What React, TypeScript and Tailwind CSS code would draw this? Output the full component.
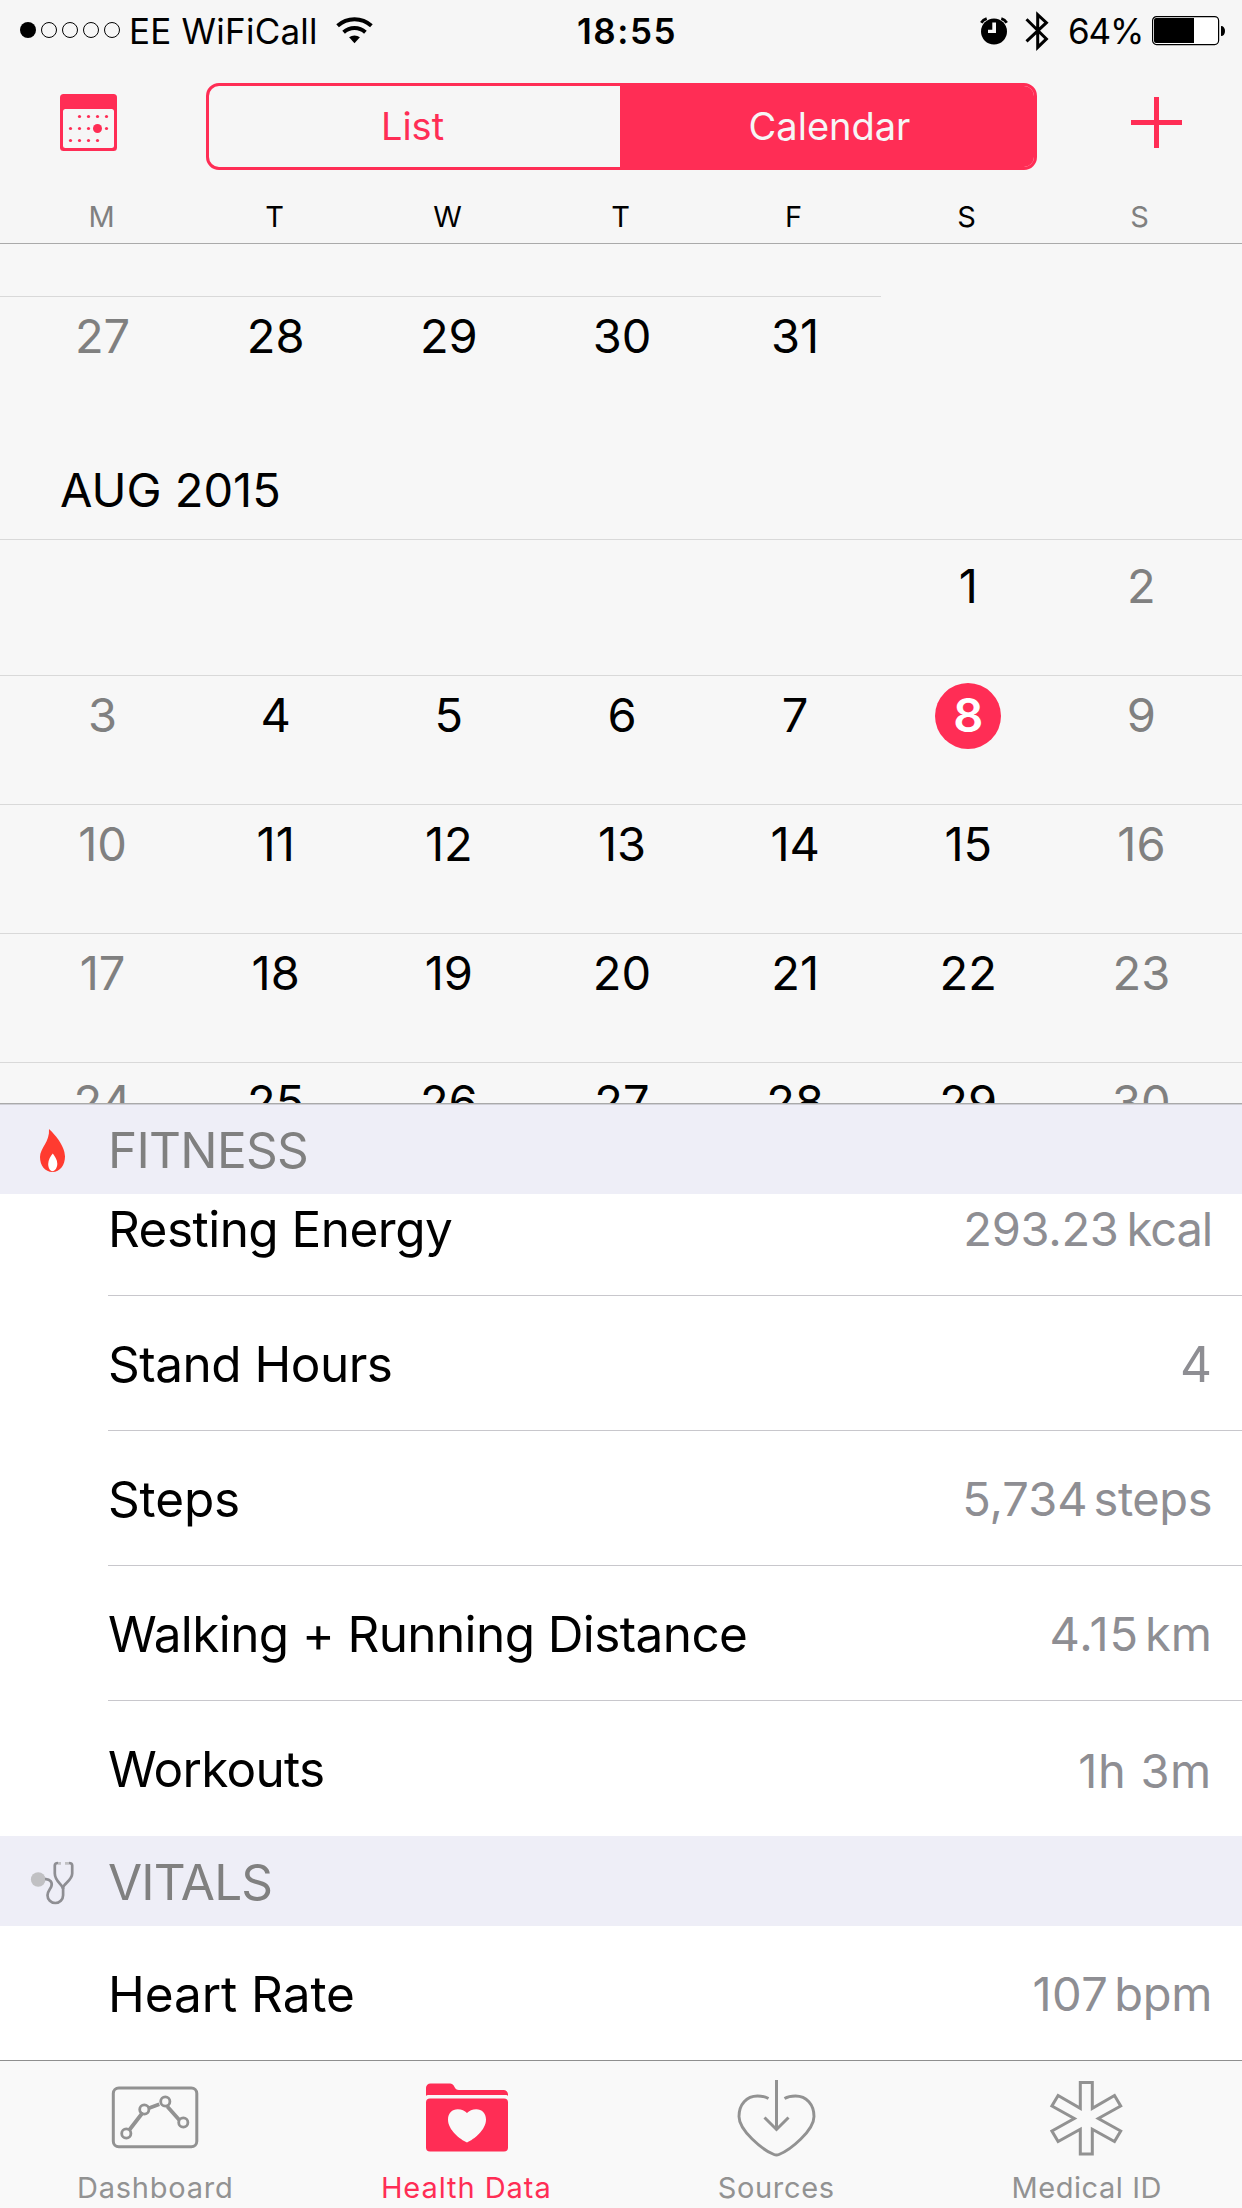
import type { ReactNode } from 'react'
import clsx from 'clsx'

const WEEKDAYS = ['M', 'T', 'W', 'T', 'F', 'S', 'S']
const TODAY = 8

// null = empty cell before the first of the month
const AUGUST: (number | null)[][] = [
  [null, null, null, null, null, 1, 2],
  [3, 4, 5, 6, 7, 8, 9],
  [10, 11, 12, 13, 14, 15, 16],
  [17, 18, 19, 20, 21, 22, 23],
  [24, 25, 26, 27, 28, 29, 30],
]

interface Metric {
  label: string
  value: string
  unit?: string
  labelClass: string
  valueClass: string
  unitClass?: string
}

const FITNESS: Metric[] = [
  {
    label: 'Resting Energy',
    value: '293.23',
    unit: 'kcal',
    labelClass: 'tracking-[-0.53px]',
    valueClass: 'pb-1 text-[47px] tracking-[-0.3px]',
    unitClass: 'ml-[8px] tracking-[-1.1px]',
  },
  {
    label: 'Stand Hours',
    value: '4',
    labelClass: 'tracking-[-0.5px]',
    valueClass: 'text-[49.5px]',
  },
  {
    label: 'Steps',
    value: '5,734',
    unit: 'steps',
    labelClass: 'tracking-[-0.15px]',
    valueClass: 'pb-1 text-[47px]',
    unitClass: 'ml-[6px] tracking-[-0.45px]',
  },
  {
    label: 'Walking + Running Distance',
    value: '4.15',
    unit: 'km',
    labelClass: 'tracking-[-0.6px]',
    valueClass: 'pb-1 text-[47px] tracking-[0.9px]',
    unitClass: 'ml-[6px] tracking-normal',
  },
  {
    label: 'Workouts',
    value: '1h 3m',
    labelClass: 'tracking-[-0.72px]',
    valueClass: 'text-[47px] tracking-[0.7px]',
  },
]

const VITALS: Metric[] = [
  {
    label: 'Heart Rate',
    value: '107',
    unit: 'bpm',
    labelClass: 'tracking-[-0.06px]',
    valueClass: 'pb-[3px] text-[47px] tracking-[0.4px]',
    unitClass: 'ml-[6px] tracking-[-0.3px]',
  },
]

export default function App() {
  return (
    <div className="flex h-[2208px] w-[1242px] flex-col overflow-hidden bg-white font-['Inter',sans-serif] text-black">
      <header className="flex h-[244px] shrink-0 flex-col border-b border-[#aaaaaa] bg-[#f6f6f6]">
        <StatusBar />
        <NavBar />
        <div className="grid grid-cols-7 pt-[20px] pr-[16px] pl-[15px] text-center text-[29px] leading-[48px]">
          {WEEKDAYS.map((d, i) => (
            <span key={i} className={clsx((i === 0 || i === 6) && 'text-[#808080]')}>
              {d}
            </span>
          ))}
        </div>
      </header>

      <Calendar />

      <main className="flex h-[957px] shrink-0 flex-col overflow-hidden">
        <SectionHeader icon={<FlameIcon />} title="FITNESS" className="border-t border-[#cfcfd6] pt-[2px] tracking-[-0.71px]" />
        {/* list is scrolled a little, the first row slides under its header */}
        <div className="flex h-[102px] shrink-0 flex-col justify-end overflow-hidden">
          <MetricRow metric={FITNESS[0]} />
        </div>
        {FITNESS.slice(1).map((m, i, rest) => (
          <MetricRow key={m.label} metric={m} last={i === rest.length - 1} />
        ))}
        <SectionHeader icon={<StethoscopeIcon />} title="VITALS" className="pt-[3px] tracking-[-0.8px]" />
        {VITALS.map((m) => (
          <MetricRow key={m.label} metric={m} />
        ))}
      </main>

      <TabBar />
    </div>
  )
}

// ─── Header ──────────────────────────────────────────────────────────────

function StatusBar() {
  return (
    <div className="grid h-[60px] shrink-0 grid-cols-3 items-center pt-[2px] text-[35px] leading-[58px]">
      <div className="flex items-center pl-[20px]">
        <svg className="-mt-0.5" width="101" height="18" viewBox="0 0 101 18">
          <circle cx="8" cy="9" r="8" />
          {[29, 50, 71, 92].map((x) => (
            <circle key={x} cx={x} cy="9" r="7.5" fill="none" stroke="#000" strokeWidth="1" />
          ))}
        </svg>
        <span className="ml-[8px] w-[189px] tracking-[0.23px] whitespace-nowrap">EE WiFiCall</span>
        <svg className="-mt-0.5 ml-[18px]" width="38" height="28" viewBox="0 0 38 28">
          <path d="M1.6 9.8a25 25 0 0 1 33.8 0M7.6 16.3a16 16 0 0 1 21.8 0" fill="none" stroke="#000" strokeWidth="3.9" />
          <path d="M18.5 27.2l-5.4-5.9a8.6 8.6 0 0 1 10.8 0z" />
        </svg>
      </div>
      <span className="ml-[12px] text-center font-semibold tracking-[1.5px]">18:55</span>
      <div className="flex items-center justify-end pr-[16px]">
        <svg className="-mt-px" width="28" height="28" viewBox="0 0 28 28">
          <circle cx="14" cy="14.5" r="13" />
          <path d="M1.3 5.8a9 9 0 0 1 5.4-4.2M26.7 5.8a9 9 0 0 0-5.4-4.2" fill="none" stroke="#000" strokeWidth="2.8" />
          <path d="M12.3 5.5H16V16H8v-3.2h4.3z" fill="#f6f6f6" />
        </svg>
        <svg className="-mt-px ml-[17px]" width="26" height="42" viewBox="0 0 26 42">
          <path d="M1.5 9.3L21.4 28.9l-8.7 8.5V4.6l8.7 8.1L1.5 31.3" fill="none" stroke="#000" strokeWidth="3" />
        </svg>
        <span className="ml-[17px] w-[74px] tracking-[-1.16px]">64%</span>
        <svg className="ml-[10px]" width="74" height="30" viewBox="0 0 74 30">
          <rect x="0.6" y="0.6" width="66" height="28" rx="4" fill="#fff" stroke="#000" strokeWidth="1.2" />
          <path d="M4 2h38v25H4a2 2 0 0 1-2-2V4a2 2 0 0 1 2-2z" />
          <path d="M69 10c2.500 0 4 2 4 5s-1.500 5-4 5z" />
        </svg>
      </div>
    </div>
  )
}

function NavBar() {
  return (
    <div className="flex h-[113px] shrink-0 items-start">
      <div className="pt-[34px] pl-[60px]">
        <CalendarIcon />
      </div>
      <div className="mt-[23px] ml-[89px] flex h-[87px] w-[831px] overflow-hidden rounded-[13px] border-[3px] border-[#ff2d55] text-center text-[38px] leading-[81px]">
        <button type="button" className="w-[411px] pr-[4px] text-[#ff2d55]">
          List
        </button>
        <button type="button" className="flex-1 bg-[#ff2d55] pl-[5px] text-[#f6f6f6]">
          Calendar
        </button>
      </div>
      <svg className="mt-[37px] ml-[94px]" width="51" height="51" viewBox="0 0 51 51">
        <path d="M25.500 0v51M0 25.500h51" stroke="#ff2d55" strokeWidth="5" />
      </svg>
    </div>
  )
}

function CalendarIcon() {
  const dots = [
    [19.5, 22.5], [28.5, 22.5], [37.5, 22.5], [46.5, 22.5],
    [10.5, 34.5], [19.5, 34.5], [28.5, 34.5], [46.5, 34.5],
    [10.5, 46.5], [19.5, 46.5], [28.5, 46.5], [37.5, 46.5],
  ]
  return (
    <svg width="57" height="57" viewBox="0 0 57 57" fill="#ff2d55">
      <rect width="57" height="57" rx="3.5" />
      <rect x="3" y="15" width="51" height="39" rx="2.5" fill="#f6f6f6" />
      {dots.map(([x, y]) => (
        <circle key={`${x}-${y}`} cx={x} cy={y} r="1.6" />
      ))}
      <circle cx="37.5" cy="34.5" r="4.5" />
    </svg>
  )
}

// ─── Calendar ────────────────────────────────────────────────────────────

function Calendar() {
  return (
    <section className="h-[860px] shrink-0 overflow-hidden border-b border-[#aaaaaa] bg-[#f7f7f7] pt-[52px]">
      <div className="h-px w-[881px] bg-[#d9d9d9]" />
      <Week days={[27, 28, 29, 30, 31, null, null]} className="h-[128px]" />
      <h2 className="flex h-[114px] items-center pt-[14px] pl-[60px] text-[47px] leading-none">AUG 2015</h2>
      {AUGUST.map((days, i) => (
        <Week
          key={i}
          days={days}
          className={clsx('border-t border-[#d9d9d9]', i === 0 ? 'h-[136px] pt-[7px]' : 'h-[129px]')}
        />
      ))}
    </section>
  )
}

function Week({ days, className }: { days: (number | null)[]; className: string }) {
  return (
    <div className={clsx('grid grid-cols-7 pr-[14px] pl-[16px]', className)}>
      {days.map((day, i) => {
        const today = day === TODAY
        return (
          <div key={i} className="flex justify-center pt-[7px]">
            {day !== null && (
              <span
                className={clsx(
                  'flex size-[66px] items-center justify-center pb-[4px] text-[47px] leading-none',
                  today && 'rounded-full bg-[#ff2d55] font-semibold text-white',
                  !today && (i === 0 || i === 6) && 'text-[#808080]',
                )}
              >
                {day}
              </span>
            )}
          </div>
        )
      })}
    </div>
  )
}

// ─── Data list ───────────────────────────────────────────────────────────

function SectionHeader({ icon, title, className }: { icon: ReactNode; title: string; className: string }) {
  return (
    <div className={clsx('flex h-[90px] shrink-0 items-center bg-[#eeeef7] text-[49.5px] text-[#808080]', className)}>
      <div className="w-[108px] pl-[30px]">{icon}</div>
      <h2 className="leading-none">{title}</h2>
    </div>
  )
}

function MetricRow({ metric, last }: { metric: Metric; last?: boolean }) {
  return (
    <div className="h-[135px] shrink-0 pl-[108px]">
      <div
        className={clsx(
          'flex h-full items-center justify-between border-b pt-[4px] pr-[30px]',
          last ? 'border-transparent' : 'border-[#c8c7cc]',
        )}
      >
        <span className={clsx('text-[49.5px] leading-none', metric.labelClass)}>{metric.label}</span>
        <span className={clsx('flex items-center leading-none text-[#8e8e93]', metric.valueClass)}>
          {metric.value}
          {metric.unit && <span className={metric.unitClass}>{metric.unit}</span>}
        </span>
      </div>
    </div>
  )
}

function FlameIcon() {
  return (
    <svg className="ml-[10px]" width="26" height="44" viewBox="0 0 26 44">
      <path
        d="M9 0c5 4.500 16 16.500 16 27.500C25 36 20 43 12.500 43S0 36.500 0 28C0 19 10 13 9 0z"
        fill="#ff3b30"
      />
      <path d="M12.800 24.500c2 3 4.500 6 4.500 10.200 0 4-2.200 7.300-4.800 7.600-2.500-.3-4.300-3.300-4.300-7.300 0-4.300 2.600-8 4.600-10.500z" fill="#fff" />
    </svg>
  )
}

function StethoscopeIcon() {
  return (
    <svg width="46" height="44" viewBox="0 0 46 44" fill="none" stroke="#8e8e93" strokeWidth="2.700">
      <circle cx="8.200" cy="18.500" r="7.300" fill="#c0c0c3" stroke="none" />
      <path d="M15 18.200c5-.5 7.800 3.300 6.300 7.300-1 2.700-3.800 4.700-3.800 8.700a7.800 7.800 0 0 0 15.600 0V27c0-4 9.100-7.500 9.100-14.500V4.500C42.200 2.800 41 2 39 2" />
      <path d="M33.100 28c0-4-8.300-7.500-8.300-15.500v-8C24.800 2.800 26 2 28 2" />
      <path d="M28 2.300h3M35 2.300h4" stroke="#c0c0c3" />
    </svg>
  )
}

// ─── Tab bar ─────────────────────────────────────────────────────────────

function TabBar() {
  return (
    <nav className="-mt-px grid h-[148px] shrink-0 grid-cols-4 border-t border-[#8f8f8f] bg-[#f9f9f9]">
      <Tab label="Dashboard" className="text-[#929292] tracking-[0.77px]">
        <g transform="translate(-0.7 0.5)">
          <rect x="20" y="12.500" width="83.500" height="58.700" rx="5.500" strokeWidth="3" />
          <path d="M36 54.500L49.500 37M56 32.500l10-3.700M74 31l12 13.500" strokeWidth="3.800" />
          <g strokeWidth="2.800">
            <circle cx="33" cy="58" r="4.600" />
            <circle cx="51" cy="34" r="4.600" />
            <circle cx="72" cy="26" r="4.600" />
            <circle cx="90" cy="47" r="4.600" />
          </g>
        </g>
      </Tab>
      <Tab label="Health Data" className="pl-px text-[#ff2d55] tracking-[0.94px]">
        <g fill="currentColor" stroke="none">
          <path d="M21 21v-8a4.500 4.500 0 0 1 4.500-4.500h18.500c3.500 0 4.500 1.500 5.500 3.500 1 2 2 3 4.500 3h44.500a4.500 4.500 0 0 1 4.500 4.500V21c-.5-.7-1.200-1-2.500-1H23.700c-1.300 0-2.200.3-2.700 1z" />
          <rect x="21" y="23.500" width="82" height="53" rx="4" />
        </g>
        <path
          d="M62 67.500C55.200 64.500 43 55 43 44.500c0-6.500 4.200-10.300 9.700-10.300 4 0 7 1.500 9.300 3.700 2.300-2.200 5.300-3.700 9.300-3.700 5.500 0 9.700 3.800 9.700 10.300 0 10.500-12.200 20-19 23z"
          fill="#f9f9f9"
          stroke="none"
        />
      </Tab>
      <Tab label="Sources" className="text-[#929292] tracking-[0.66px]">
        <path
          d="M53.500 23.500C50 21.500 46.500 21 42.500 21 31.500 21 24 29.500 24 41.500c0 14 23.500 33.500 35 38 1.800.7 3.200.7 5 0 11.500-4.500 35-24 35-38C99 29.500 91.500 21 80.500 21c-4 0-7.500.5-11 2.500"
          strokeWidth="2.900"
        />
        <path d="M61.500 5v48.500M49.500 42.500l12 12 12-12" strokeWidth="3" />
      </Tab>
      <Tab label="Medical ID" className="text-[#929292] tracking-[0.56px]">
        <path
          d="M55.300 7.500h12v25.800l22.200-12.800 6.200 10.500-22.400 12.500 22.400 12.500-6.200 10.500-22.200-12.300v24.800h-12V54.200L33.100 66.500 26.900 56l22.400-12.500L26.900 31l6.200-10.500 22.200 12.800z"
          strokeWidth="3"
        />
      </Tab>
    </nav>
  )
}

function Tab({ label, className, children }: { label: string; className: string; children: ReactNode }) {
  return (
    <button type="button" className={clsx('flex flex-col items-center pt-[14px] text-[29px]', className)}>
      <svg width="123" height="84" viewBox="0 0 123 84" fill="none" stroke="currentColor">
        {children}
      </svg>
      <span className="mt-[9px] leading-[40px]">{label}</span>
    </button>
  )
}
